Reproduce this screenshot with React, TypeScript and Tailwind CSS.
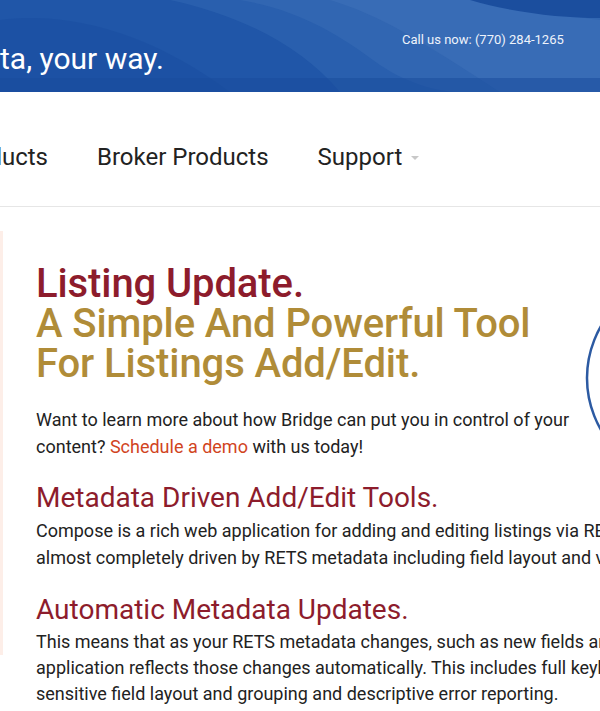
import React from "react";

export default function App() {
  return (
    <div className="relative w-[600px] h-[711px] overflow-hidden bg-white" style={{ fontFamily: "Roboto, 'Noto Sans', sans-serif" }}>
      {/* Header */}
      <header className="relative h-[92px] bg-[#1f55a6] overflow-hidden">
        <svg className="absolute inset-0" width="600" height="92" viewBox="0 0 600 92" preserveAspectRatio="none">
          <rect width="600" height="92" fill="#2056a8" />
          <path d="M0 20 C 80 10, 160 40, 230 92 L 0 92 Z" fill="#1c50a2" opacity="0.8" />
          <path d="M170 0 C 240 15, 300 45, 340 92 L 600 92 L 600 0 Z" fill="#2a60ae" opacity="0.9" />
          <path d="M240 0 C 300 10, 340 35, 380 65 C 410 85, 440 92, 460 92 L 600 92 L 600 0 Z" fill="#3367b3" opacity="0.85" />
          <path d="M330 0 C 380 15, 420 40, 500 92 L 600 92 L 600 20 C 560 15, 520 5, 500 0 Z" fill="#3f72ba" opacity="0.5" />
          <path d="M470 0 C 510 12, 560 18, 600 18 L 600 0 Z" fill="#1b4e9e" />
          <path d="M0 78 L 600 78 L 600 92 L 0 92 Z" fill="#1a4c9c" opacity="0.55" />
        </svg>
        <div className="relative flex h-full">
          <div className="flex-1 pt-[40px] text-[30px] leading-[38px] text-white">ta, your way.</div>
          <div className="w-[198px] pt-[30px] text-[13px] text-[#eef3fb]">Call us now: (770) 284-1265</div>
        </div>
      </header>

      {/* Nav */}
      <nav className="h-[115px] border-b border-[#e6e6e6] flex items-center">
        <div className="flex items-center gap-[49px] ml-[-152px] text-[24px] text-[#222] pt-[16px]">
          <span className="w-[200px] text-right whitespace-nowrap">MLS Products</span>
          <span className="whitespace-nowrap">Broker Products</span>
          <span className="flex items-center gap-[9px] whitespace-nowrap">
            Support
            <span className="inline-block w-0 h-0 border-l-[4px] border-r-[4px] border-t-[4px] border-l-transparent border-r-transparent border-t-[#c8c8c8] mt-[2px]" />
          </span>
        </div>
      </nav>

      {/* Content */}
      <div className="relative flex">
        <div className="w-[3px] mt-[24px] h-[424px] bg-[#fdeee8] shrink-0" />
        <div className="w-[760px] pl-[33px] pt-[57px] shrink-0">
          <h1 className="text-[40px] leading-[40px] font-medium tracking-[-0.1px]">
            <span className="text-[#8d1c2c]">Listing Update.</span>
            <br />
            <span className="text-[#b08c38]">A Simple And Powerful Tool</span>
            <br />
            <span className="text-[#b08c38]">For Listings Add/Edit.</span>
          </h1>
          <p className="mt-[22px] text-[18px] leading-[27px] text-[#222]">
            Want to learn more about how Bridge can put you in control of your
            <br />
            content? <a className="text-[#d1441e]">Schedule a demo</a> with us today!
          </p>
          <h2 className="mt-[21px] text-[28px] leading-[34px] text-[#8d1c2c]">Metadata Driven Add/Edit Tools.</h2>
          <p className="mt-[3px] text-[18px] leading-[26.5px] text-[#222]">
            Compose is a rich web application for adding and editing listings via RETS. It is
            <br />
            almost completely driven by RETS metadata including field layout and validation rules.
          </p>
          <h2 className="mt-[22px] text-[28px] leading-[34px] text-[#8d1c2c]">Automatic Metadata Updates.</h2>
          <p className="mt-[2px] text-[18px] leading-[26px] text-[#222]">
            This means that as your RETS metadata changes, such as new fields and lookups, the
            <br />
            application reflects those changes automatically. This includes full keyboard and context
            <br />
            sensitive field layout and grouping and descriptive error reporting.
          </p>
        </div>
        <svg className="absolute left-[580px] top-[61px]" width="240" height="240" viewBox="0 0 240 240">
          <circle cx="110" cy="110" r="103" fill="none" stroke="#2c5aa2" strokeWidth="2.5" />
        </svg>
      </div>
    </div>
  );
}
